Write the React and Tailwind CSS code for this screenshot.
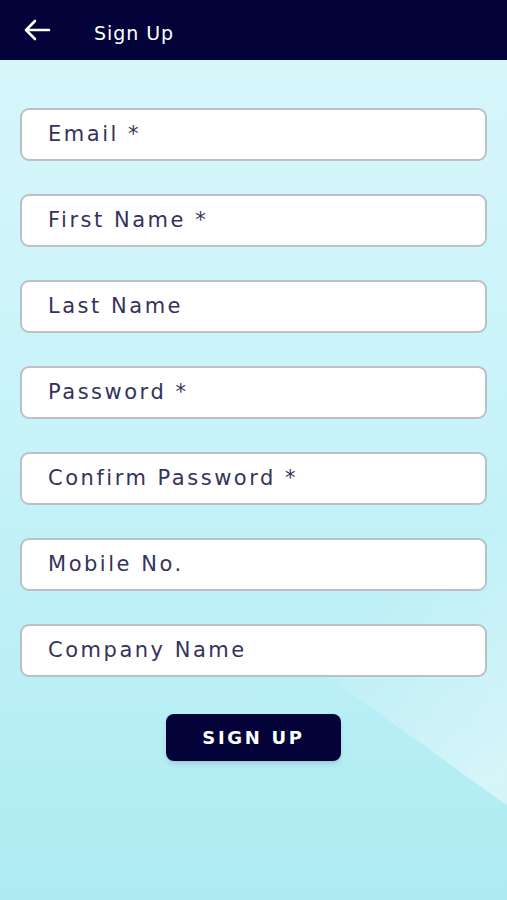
import React from 'react'

const fields = [
  'Email *',
  'First Name *',
  'Last Name',
  'Password *',
  'Confirm Password *',
  'Mobile No.',
  'Company Name',
]

const App = () => {
  return (
    <div className="relative w-[507px] h-[900px] overflow-hidden bg-gradient-to-b from-[#d9f7fb] via-[#c6f3f9] to-[#aeebf2] font-['DejaVu_Sans',sans-serif]">
      {/* soft swoosh in the background */}
      <svg className="absolute inset-0 pointer-events-none" width="507" height="900" viewBox="0 0 507 900">
        <defs>
          <linearGradient id="sw" x1="0.7" y1="1" x2="0.3" y2="0">
            <stop offset="0" stopColor="#ffffff" stopOpacity="0.45" />
            <stop offset="0.65" stopColor="#ffffff" stopOpacity="0" />
          </linearGradient>
        </defs>
        <path d="M310 665 C 390 720, 450 765, 507 805 L 507 480 C 430 560, 360 620, 310 665 Z" fill="url(#sw)" />
      </svg>

      <div className="relative h-[60px] bg-[#03033a] flex items-center">
        <svg className="ml-[24px]" width="27" height="22" viewBox="0 0 27 22" fill="none">
          <path d="M25 11H3M11 2L2 11L11 20" stroke="white" strokeWidth="2.6" strokeLinecap="round" strokeLinejoin="round" />
        </svg>
        <span className="ml-[43px] text-white text-[19px] font-medium tracking-[0.05em] pt-[6px]">Sign Up</span>
      </div>

      <div className="relative flex flex-col gap-[33px] px-[20px] pt-[48px]">
        {fields.map((f) => (
          <div key={f} className="h-[53px] bg-white border-2 border-[#bcbfc4] rounded-[9px] flex items-center pl-[26px]">
            <span className="text-[#33335c] text-[21px] tracking-[0.12em]">{f}</span>
          </div>
        ))}
      </div>

      <div className="relative flex justify-center mt-[37px]">
        <button className="w-[175px] h-[47px] bg-[#03033a] rounded-[8px] text-white text-[18px] font-semibold tracking-[0.15em] shadow-md">
          SIGN UP
        </button>
      </div>
    </div>
  )
}

export default App
